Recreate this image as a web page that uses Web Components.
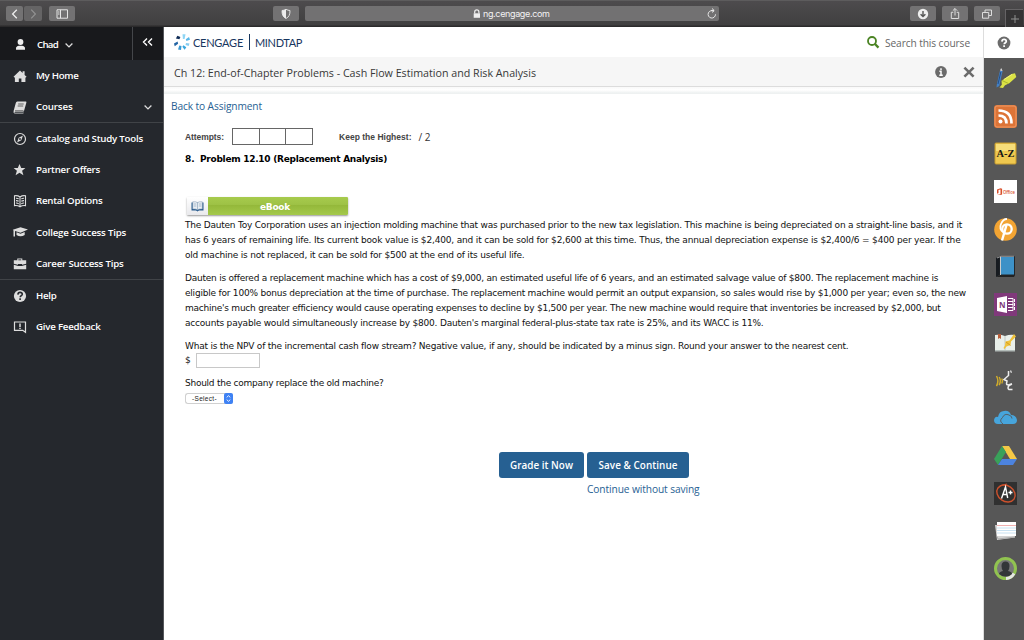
<!DOCTYPE html>
<html lang="en"><head><meta charset="utf-8"><title>MindTap</title>
<style>
html,body{margin:0;height:100%;overflow:hidden;background:#fff}
body{font-family:"Open Sans","Noto Sans",sans-serif}
</style></head><body>
<mind-app></mind-app>
<script>
const make=(name,html,setup)=>customElements.define(name,class extends HTMLElement{
  connectedCallback(){
    if(this.shadowRoot)return;
    const r=this.attachShadow({mode:'open'});
    r.innerHTML=typeof html==='function'?html(this):html;
    if(setup)setup(this,r);
  }
});
const icons={
user:'<circle cx="8.500" cy="5" r="2.900" fill="#eee"/><path d="M4 12.800v-1.600q0-2 3-2.500h3q3 .5 3 2.500v1.600z" fill="#eee"/>',
home:'<path d="M1.500 8.800 8 2.600l2.600 2.500V3.300h2v3.600l2 1.900-1.200 1V14H9.400v-3.600H6.800V14H2.900V9.800z" fill="#ddd"/>',
courses:'<path d="M5.300 2.500h8.500q.8 0 .6 1l-2.400 8.500q-.3.8-1.200.8H3.500q-1.200.2-1 1h8.800l.5-.7-.4 1.400H2.600q-1.500-.4-1-2.500L3.800 4q.3-1.500 1.500-1.500z" fill="#ddd"/><path d="M6.200 5h5.500M5.700 7h5.500M3 11.800h8.500" stroke="#555" stroke-width=".9"/>',
compass:'<circle cx="8" cy="8" r="5.500" fill="none" stroke="#ddd" stroke-width="1.200"/><path d="M11 4.600 9.300 9.200 5 11.400l1.700-4.700z" fill="#ddd"/><circle cx="8" cy="8" r=".9" fill="#25282d"/>',
star:'<path d="m7.500 2 1.700 3.900h4.200l-3.300 2.800 1.300 4.500-3.900-2.500-3.900 2.500 1.300-4.500-3.300-2.800h4.200z" fill="#ddd"/>',
book:'<path d="M8 4Q5.500 2.200 2.500 2.800v9.800q3-.5 5.500 1.200 2.500-1.700 5.500-1.200V2.800Q10.500 2.200 8 4zV13.500M4 5.200q1.500-.1 2.700.7M4 7.600q1.500-.1 2.700.7M4 10q1.500-.1 2.700.7M12 5.200q-1.500-.1-2.700.7M12 7.600q-1.500-.1-2.700.7M12 10q-1.500-.1-2.700.7" fill="none" stroke="#ddd" stroke-width="1.100"/>',
cap:'<path d="M.8 4.800 8.500 2.200 16 4.600 8.500 7.800 3 5.900v5.600H1.500V5.400z" fill="#ddd"/><path d="M4.500 7.300 8.500 8.800l4.200-1.700v2.800q-4.200 2.800-8.200 0z" fill="#ddd"/>',
brief:'<path d="M5.300 4.300V2.500h5v1.800M1.800 4.300h12.400v3.400L10 8.800v-.7H6v.7L1.800 7.700zM1.800 8.800l4.300 1.100h3.800l4.300-1.100v4.400H1.800z" fill="#ddd"/><path d="M6.300 4.300V3.400h3v.9z" fill="#25282d"/>',
help:'<circle cx="8" cy="8" r="6.100" fill="#ddd"/><path d="M5.900 6.600q.1-2.200 2.200-2.200t2.200 1.800c0 1.500-2 1.500-2.100 3.100M8.100 10.300v1.600" fill="none" stroke="#25282d" stroke-width="1.600"/>',
feedback:'<path d="M2.500 3h11v10.300l-2.800-2H2.500z" fill="none" stroke="#ddd" stroke-width="1.200"/><path d="M8 4.400v3.500M8 8.800v1.300" stroke="#ddd" stroke-width="1.500"/>',
qgray:'<circle cx="8" cy="8" r="6.400" fill="#6b6b6b"/><path d="M5.900 6.600q.1-2.200 2.200-2.200t2.200 1.800c0 1.500-2 1.500-2.100 3.100M8.100 10.300v1.600" fill="none" stroke="#fff" stroke-width="1.700"/>',
info:'<circle cx="8" cy="8" r="5.900" fill="#6b6b6b"/><path d="M8 4.300v1.700M6.400 7.300H8v4M6.300 11.200h3.500" fill="none" stroke="#fff" stroke-width="1.500"/>',
close:'<path d="m3.400 3.600 9.200 9M12.600 3.600l-9.200 9" stroke="#6b6b6b" stroke-width="2.600"/>',
search:'<circle cx="7" cy="7" r="4" fill="none" stroke="#4b8424" stroke-width="1.800"/><path d="m10 10 3.500 3.600" stroke="#4b8424" stroke-width="2.300"/>',
down:'<path d="m4.600 6.500 3.400 3.400 3.400-3.400" fill="none" stroke="#ddd" stroke-width="1.300"/>',
dbl:'<path d="M7 4.500 3.500 8 7 11.500M12 4.500 8.500 8l3.500 3.500" fill="none" stroke="#fff" stroke-width="1.400"/>',
back:'<path d="M9.800 3.700 5.600 8l4.200 4.300" fill="none" stroke="#eee" stroke-width="1.300"/>',
fwd:'<path d="M6.200 3.700 10.400 8l-4.200 4.300" fill="none" stroke="#929292" stroke-width="1.200"/>',
panel:'<path d="M3 3.800h10.500v8.400H3zM6.500 3.800v8.400M4 6h1.500M4 8h1.500" fill="none" stroke="#e5e5e5"/>',
shield:'<path d="M8 3.300q2 1.200 4 1.200c.1 4-1 6.500-4 8-3-1.500-4.100-4-4-8q2 0 4-1.200z" fill="none" stroke="#ddd"/><path d="M8 3.300v9.200c-3-1.500-4.100-4-4-8q2 0 4-1.200z" fill="#eee"/>',
lock:'<path d="M5.700 7.500V5.900q0-2 2.100-2t2.100 2v1.600" fill="none" stroke="#eee" stroke-width="1.200"/><path d="M4.700 7.300H11v4.500H4.700z" fill="#eee"/>',
reload:'<path d="M10.900 5.300A3.700 3.700 0 1 0 12.500 8.300M8 4.500h3M9 2.500l2.200 2-2.200 2" fill="none" stroke="#e5e5e5"/>',
dl:'<circle cx="8" cy="8" r="5.200" fill="#eee"/><path d="M8 5v5.500M5.600 8.200 8 10.600l2.400-2.400" fill="none" stroke="#555" stroke-width="1.400"/>',
share:'<path d="M6.300 6.300h-2v6.200h7.400V6.300h-2M8 9.500V2.600M5.800 4.700 8 2.500l2.200 2.200" fill="none" stroke="#ddd"/>',
tabs:'<path d="M3.500 6.500h6.200v5.700H3.500zM6 6.300V4h6.500v5.500h-2.600" fill="none" stroke="#ddd"/>',
plus:'<path d="M8 4v8M4 8h8" stroke="#909090"/>',
logo:'<path d="M8.500.3h3L10.600 5H8.900z" fill="#8fd6f5"/><path d="m11.800 5.300 3.200-2.200 1 2.600-3.600 1.400z" fill="#5bb8e8"/><path d="m12 9 3.500.4-.8 2.600-3.200-1z" fill="#86cdf1"/><path d="m9.400 11.300 2.900 1.900-1.700 2.500-2.200-3z" fill="#36a7df"/><path d="m5.300 11.400 2.200.5-.5 4.100-3-.6z" fill="#3c9ad3"/><path d="m3.600 7.500.5 2.300-3.400 2.400L0 9.500z" fill="#2465a4"/><path d="m3.400 1.800 3 1.200-1 2.300-3.500-.8z" fill="#102d57"/>'
};
make('ui-icon',h=>`<style>:host{display:block;flex:none;width:16px;height:16px}svg{display:block;width:100%;height:100%}</style><svg viewBox="0 0 16 16">${icons[h.getAttribute('name')]}</svg>`);

make('browser-button','<style>:host{display:flex;align-items:center;justify-content:center;box-sizing:border-box;height:15px;width:26px;flex:none;background:#737273;border-radius:2px}</style><slot></slot>');
make('browser-bar',`<style>
:host{display:flex;align-items:center;box-sizing:border-box;height:27px;padding-left:6px;background:linear-gradient(#5d5c5d 0 1px,#4d4b4d 1px,#403f40 25px,#2b2a2b 26px);font-family:Inter,"Liberation Sans",sans-serif}
.b{width:17px;margin-right:1px}.d{width:18px;background:#656465}
.url{display:flex;align-items:center;width:414px;height:15px;background:#727172;border-radius:2px;margin-left:6px;box-sizing:border-box;padding:0 0 0 164px;color:#f2f2f2;font-size:9px}
.url x-fit{margin-left:-2px}
.plus{align-self:flex-end;width:18px;height:18px;border:solid #656365;border-width:1px 0 0 1px;background:#353435;display:flex;justify-content:center;align-items:center;box-sizing:border-box;margin-left:5px}
</style>
<browser-button class="b"><ui-icon name="back"></ui-icon></browser-button><browser-button class="d"><ui-icon name="fwd"></ui-icon></browser-button>
<browser-button style="margin-left:7px"><ui-icon name="panel"></ui-icon></browser-button>
<browser-button style="margin-left:198px"><ui-icon name="shield"></ui-icon></browser-button>
<div class="url"><ui-icon name="lock"></ui-icon><x-fit w="66.500">ng.cengage.com</x-fit><ui-icon name="reload" style="margin-left:153px"></ui-icon></div>
<browser-button style="margin-left:191px"><ui-icon name="dl"></ui-icon></browser-button>
<browser-button style="margin-left:6px"><ui-icon name="share"></ui-icon></browser-button>
<browser-button style="margin-left:6px"><ui-icon name="tabs"></ui-icon></browser-button>
<div class="plus"><ui-icon name="plus"></ui-icon></div>`);

make('nav-item',h=>`<style>:host{display:flex;align-items:center;height:31.200px;box-sizing:border-box;padding-left:12px;color:#fff;font:600 9.700px "Open Sans",sans-serif}
.t{margin-left:8px;padding-bottom:1px}.m{margin-left:auto;margin-right:7px}</style><ui-icon name="${h.getAttribute('icon')}"></ui-icon><x-fit class="t" w="${h.getAttribute('w')}">${h.getAttribute('label')}</x-fit>${h.hasAttribute('more')?'<ui-icon class="m" name="down"></ui-icon>':''}`);
make('side-nav',`<style>:host{display:flex;flex-direction:column;width:164px;box-sizing:border-box;background:#25282d;border-right:1px solid #55575b}
.u{display:flex;height:33px;background:#18191c;align-items:center;font:600 9.700px "Open Sans",sans-serif;color:#fff}
.n{width:133px;height:33px;box-sizing:border-box;border-right:1px solid #44464a;display:flex;align-items:center;padding:2px 0 0 12px}
.n x-fit{margin:0 3px 0 9px}.c{flex:1;display:flex;justify-content:center;padding-bottom:3px}
hr{margin:0;border:0;height:1px;background:#404347;flex:none}</style>
<div class="u"><div class="n"><ui-icon name="user"></ui-icon><x-fit w="21">Chad</x-fit><ui-icon name="down"></ui-icon></div><div class="c"><ui-icon name="dbl"></ui-icon></div></div>
<nav-item icon="home" label="My Home" w="42.500"></nav-item><nav-item icon="courses" label="Courses" w="36.500" more></nav-item><hr>
<nav-item icon="compass" label="Catalog and Study Tools" w="107"></nav-item><nav-item icon="star" label="Partner Offers" w="64"></nav-item><nav-item icon="book" label="Rental Options" w="66.500"></nav-item><nav-item icon="cap" label="College Success Tips" w="90"></nav-item><nav-item icon="brief" label="Career Success Tips" w="87.500"></nav-item><hr>
<nav-item icon="help" label="Help" w="20.500"></nav-item><nav-item icon="feedback" label="Give Feedback" w="64.500"></nav-item>`);

make('course-header',`<style>:host{display:block;font-family:"Open Sans","Noto Sans",sans-serif}
.a{height:30px;display:flex;align-items:center;padding:0 13px 0 10px;background:#fff;color:#17365e;font:11px Lato,sans-serif}
.a .s{width:1px;height:16px;background:#17365e;margin:0 5px 0 6px}.a .f{margin-left:auto;margin-right:4px}.q{font:10.200px "Open Sans",sans-serif;color:#666;padding-top:1px}
.b{display:flex;align-items:center;background:#f6f6f6;padding:2px 6px 0 10px;box-sizing:border-box;color:#383838;font-size:10.700px;border-bottom:1px solid #dcdcdc;height:30px}
.b .i{margin-left:auto;margin-right:12px}.b ui-icon{margin-top:-1px}.g{height:7px;background:linear-gradient(#fafafa 0 1px,#fff 3px,#eef1f1 6px)}
</style><div class="a"><ui-icon name="logo"></ui-icon><x-fit w="50" style="margin-left:3px">CENGAGE</x-fit><i class="s"></i><x-fit w="47">MINDTAP</x-fit><ui-icon class="f" name="search"></ui-icon><x-fit class="q" w="85">Search this course</x-fit></div>
<div class="b"><x-fit w="362">Ch 12: End-of-Chapter Problems - Cash Flow Estimation and Risk Analysis</x-fit><ui-icon class="i" name="info"></ui-icon><ui-icon name="close"></ui-icon></div><div class="g"></div>`);

make('action-button','<style>:host{display:flex;align-items:center;justify-content:center;box-sizing:border-box;height:26px;background:#266092;border-radius:3px;color:#fff;font:600 9.900px "Open Sans",sans-serif}</style><slot></slot>');
make('ebook-button',`<style>:host{display:flex;box-sizing:border-box;width:161px;height:18px;border-radius:1px;box-shadow:0 1px 2px #999;overflow:hidden}
.i{width:21px;background:linear-gradient(#fff,#e9e9ec);display:flex;align-items:center;justify-content:center}.t{flex:1;display:flex;align-items:center;justify-content:center;padding-right:6px;padding-top:2px;background:linear-gradient(#a7cb4d 0%,#9dc145 45%,#94b83a 46%,#a4c94b);color:#fff;font:bold 9px "DejaVu Sans",sans-serif}</style>
<div class="i"><svg width="13" height="11" viewBox="0 0 13 11"><path d="M.5 1.500h12v8H8L6.500 10.500 5 9.500H.5z" fill="#275a8c"/><path d="M1.700.8Q5 .3 6.500 1.600 8 .3 11.300.8v7.200Q8 7.600 6.500 8.800 5 7.600 1.700 8z" fill="#e9eef3" stroke="#7893ae" stroke-width=".5"/><path d="M6.500 1.600v7M2.800 3h2.500M2.800 5h2.500M7.800 3h2.500M7.800 5h2.500" stroke="#91a8bd" stroke-width=".7"/></svg></div><div class="t"><x-fit w="30">eBook</x-fit></div>`);

make('problem-page',`<style>:host{display:flex;flex-direction:column;padding:0 0 0 21px;font:9px/15px "DejaVu Sans",sans-serif;color:#111}
.back{margin:5px 0 0 -14px;font:10.200px/14px "Open Sans",sans-serif;color:#286193}
.att{display:flex;align-items:center;margin-top:15px;height:17px;font:bold 8.500px "Liberation Sans",sans-serif;color:#444}
.boxes{display:flex;margin:0 26px 0 8px;border:1px solid #666;box-sizing:border-box;width:81px;height:17px}.boxes i{flex:1;border-right:1px solid #666}.boxes i:last-child{border:0}
h2{font:bold 9px/15px "DejaVu Sans",sans-serif;margin:7px 0 0;color:#000}
ebook-button{margin:30px 0 0 2px}p{margin:0 0 8px;display:flex;flex-direction:column;align-items:flex-start}
.n{display:flex;align-items:center;height:15px;margin-top:-1px}.n input{width:64px;height:15px;box-sizing:border-box;border:1px solid #c8c8c8;padding:0;margin:0 0 0 5px}
.sel{display:flex;width:48px;height:11px;border:1px solid #d0d0d0;border-right:0;border-radius:3px;box-sizing:border-box;font:6.500px/9px "Liberation Sans",sans-serif;margin-top:2px;color:#222}
.sel x-fit{margin-left:6px;flex:none}.sel svg{margin:-1px 0 0 auto;flex:none}
.act{display:flex;gap:3px;margin:48px 0 0 314px}.skip{margin:4px 0 0 402px;font:10.200px/14px "Open Sans",sans-serif;color:#286193}
</style>
<x-fit class="back" w="91">Back to Assignment</x-fit>
<div class="att"><x-fit w="39">Attempts:</x-fit><div class="boxes"><i></i><i></i><i></i></div><x-fit w="72.500">Keep the Highest:</x-fit><x-fit w="12" style="margin-left:7px;font:10px 'Open Sans',sans-serif;color:#333">/ 2</x-fit></div>
<h2><x-fit style="width:15px" nofit>8.</x-fit><x-fit w="187">Problem 12.10 (Replacement Analysis)</x-fit></h2>
<ebook-button></ebook-button>
<p style="margin-top:3px"><x-fit w="777">The Dauten Toy Corporation uses an injection molding machine that was purchased prior to the new tax legislation. This machine is being depreciated on a straight-line basis, and it</x-fit><x-fit w="775.500">has 6 years of remaining life. Its current book value is $2,400, and it can be sold for $2,600 at this time. Thus, the annual depreciation expense is $2,400/6 = $400 per year. If the</x-fit><x-fit w="339.500">old machine is not replaced, it can be sold for $500 at the end of its useful life.</x-fit></p>
<p><x-fit w="753">Dauten is offered a replacement machine which has a cost of $9,000, an estimated useful life of 6 years, and an estimated salvage value of $800. The replacement machine is</x-fit><x-fit w="781">eligible for 100% bonus depreciation at the time of purchase. The replacement machine would permit an output expansion, so sales would rise by $1,000 per year; even so, the new</x-fit><x-fit w="755.500">machine's much greater efficiency would cause operating expenses to decline by $1,500 per year. The new machine would require that inventories be increased by $2,000, but</x-fit><x-fit w="578.500">accounts payable would simultaneously increase by $800. Dauten's marginal federal-plus-state tax rate is 25%, and its WACC is 11%.</x-fit></p>
<p><x-fit w="663.500">What is the NPV of the incremental cash flow stream? Negative value, if any, should be indicated by a minus sign. Round your answer to the nearest cent.</x-fit><span class="n"><x-fit w="5.500">$</x-fit><input></span></p>
<x-fit w="198.500">Should the company replace the old machine?</x-fit>
<div class="sel"><x-fit w="25">-Select-</x-fit><svg width="9" height="11" viewBox="0 0 9 11"><rect width="9" height="11" rx="2" fill="#3f82f4"/><path d="M2.700 4.400 4.500 2.700l1.800 1.700M2.700 6.600l1.800 1.700 1.800-1.700" fill="none" stroke="#fff" stroke-width=".9"/></svg></div>
<div class="act"><action-button style="width:85px"><x-fit w="63">Grade it Now</x-fit></action-button><action-button style="width:102px"><x-fit w="79">Save &amp; Continue</x-fit></action-button></div>
<x-fit class="skip" w="112.500">Continue without saving</x-fit>`);

const apps=[
'<path d="m6 3.500 2.600.6L5.300 19l-2.800 1.500.3-3z" fill="#4380c4"/><path d="m6 3.500 1.200-2.500 1.400 3.100z" fill="#ddd"/><path d="m4 17 2.800-12" stroke="#244f88"/><path d="m17.500 7 3.500-.8L22.300 10l-7 6.200-4.300 2-2 2.800-3.500-.5 2.300-2.700-.3-4z" fill="#dbe246"/><path d="m8 13.500 6.500 3" stroke="#a9b52c"/><path d="m10 12.500 8-5" stroke="#f1f47c"/>',
'<rect width="23" height="23" rx="3" fill="#dd7437"/><rect x="1" y="1" width="21" height="21" rx="2" fill="none" stroke="#ef9965"/><circle cx="6.500" cy="16.500" r="2" fill="#fff"/><path d="M4.500 10.500q8 0 8 8M4.500 5.500q13 0 13 13" fill="none" stroke="#fff" stroke-width="2.700"/>',
'<rect x="1" y="1" width="21" height="21" rx="1" fill="#efc84f" stroke="#c79d31"/><path d="M2 2h19v7H2z" fill="#f7de7a"/><text x="2.500" y="15" textLength="18" lengthAdjust="spacingAndGlyphs" font-family="Liberation Serif" font-weight="bold" font-size="10.500" fill="#151515">A-Z</text>',
'<path fill="#fff" d="M0 0h23v23H0z"/><path d="m3 9.500 3.500-1.200 1.600.5v5.700l-1.600.5L3 14l3.500.2v-4.700l-2 .6v3L3 13.700z" fill="#d94f2b"/><text x="9" y="13.700" textLength="12" lengthAdjust="spacingAndGlyphs" font-family="Open Sans" font-size="5" font-weight="600" fill="#d94f2b">Office</text>',
'<circle cx="11.500" cy="11.500" r="11.300" fill="#f2a433"/><path d="M8 22.500 12.500 7" fill="none" stroke="#fff" stroke-width="2.400"/><circle cx="13" cy="11" r="4.700" fill="none" stroke="#fff" stroke-width="2.300"/><path d="M9 14Q5 11 7 6t6-5" fill="none" stroke="#fff" stroke-width="1.800"/>',
'<path d="m2 3 4-2v19l-4 2z" fill="#171b20"/><path d="M6 1.500h14.500V20H6z" fill="#3d91c7" stroke="#23272b"/><path d="m2 22 4-2h15l-1 2z" fill="#222"/><path d="M6.500 2v18" stroke="#ccc"/><path d="m3 3 4-1.700h13" stroke="#999" fill="none"/>',
'<path fill="#80397b" d="M0 0h23v23H0z"/><path fill="#fff" d="m3 5 10-2v17L3 18z"/><text x="5" y="14.500" font-family="Open Sans" font-weight="bold" font-size="8" fill="#80397b">N</text><path d="M14 5.500h5v12h-5M14 8.500h5M14 11.500h5M14 14.500h5M20.500 6v3M20.500 10v3M20.500 14v3" fill="none" stroke="#fff"/>',
'<path d="M1 4q5-1 10 1 5-2 10-1v15H1z" fill="#e9efea"/><path d="M1 19h20v1.500H1z" fill="#b4bdba"/><path d="M11 5v14" stroke="#bec7c4"/><path d="M4 3h3v5L5.500 7 4 8z" fill="#b95e3a"/><path d="m20 3 2 2.500-5 5-.5 3.500-4 1.500-2 2.500-1-1 1.500-2.500.5-4 4-1z" fill="#efc23c"/><path d="m12 11 4.500 3.500" stroke="#d59b20"/>',
'<path d="M7.800 9.500q1.400 2.500 0 5M5.200 8q2.300 4 0 8.200M2.500 7q2.800 5 0 10.200" fill="none" stroke="#d0ac2b" stroke-width="1.500"/><path d="M14.500 2v4.500L10 10.500l3 1.500-.5 2.500q0 1.500 2 1.500l3.500-1.300M18 15l-3 1.500q-2 3 0 4h3.500" fill="none" stroke="#eee" stroke-width="1.500"/><path d="m16.500 1.500 1 2.200" stroke="#ddd" stroke-width="1.300"/>',
'<path d="M4 18q-4 0-4-4 1-4 4-3 1-6 6-6 5-1 7 4 5 0 6 5 0 4-4 4z" fill="#47a5dc"/><path d="M9 18q-4.500-3-.5-6.500 2-4.500 6.500-2.500 3 1 3 3.500" fill="none" stroke="#575757" stroke-width=".9"/>',
'<path d="M8 2h7l8 13h-7z" fill="#f4c846"/><path d="m8 2 4 6-8 13-4-6z" fill="#39a15a"/><path d="M8 15h15l-4 6H4z" fill="#4c83df"/>',
'<path fill="#303030" d="M0 0h23v23H0z"/><ellipse cx="12" cy="11.500" rx="9.800" ry="7.800" transform="rotate(35 12 11.500)" fill="none" stroke="#cc512d" stroke-width="1.400"/><path d="M3 7Q7 2 13 2" fill="none" stroke="#cc512d"/><path d="M7.500 16.500 11.500 5l2.200 11M8.500 12.500h5M14.500 10.500h4M16.500 8.500v4" fill="none" stroke="#fff" stroke-width="1.400"/>',
'<path d="m1 6 19 1 1 11.500L3 21z" fill="#d3d3d3"/><path d="M3 3h19v14H3z" fill="#fff"/><path d="M3 6.500h19" stroke="#efb0b0"/><path d="M3 9h19M3 11.500h19M3 14h19" stroke="#c3dff0" stroke-width=".9"/><path d="m3 17.500 1 2.500 17-2" fill="none" stroke="#aaa"/>',
'<circle cx="11.500" cy="11.500" r="10" fill="#777" stroke="#91c350" stroke-width="3"/><path d="M12 21.500q5 0 8-5" fill="none" stroke="#e5e5e5" stroke-width="3"/><path d="M7.500 9q0-4.500 4-4.500t4 4.500q0 3-1.500 5 4 1 4 3-3 2.500-6.500 2.500T5 17q0-2 4-3-1.500-2-1.500-5z" fill="#333638"/>'
];
make('app-tile',h=>`<style>:host{display:block;width:23px;height:23px}svg{display:block}</style><svg width="23" height="23" viewBox="0 0 23 23">${apps[+h.getAttribute('app')]}</svg>`);
make('app-rail',`<style>:host{display:flex;flex-direction:column;width:41px;box-sizing:border-box;border-left:1px solid #ddd;background:#575757}
.q{height:31px;background:#fff;display:flex;align-items:center;justify-content:center}.l{display:flex;flex-direction:column;align-items:center;gap:14.700px;padding:9px 0 0 2px}</style><div class="q"><ui-icon name="qgray"></ui-icon></div><div class="l">${apps.map((_,i)=>`<app-tile app="${i}"></app-tile>`).join('')}</div>`);

make('mind-app',`<style>:host{display:grid;grid-template:27px 613px/164px 819px 41px;width:1024px;height:640px;background:#fff}browser-bar{grid-column:1/4}main{min-width:0}</style>
<browser-bar></browser-bar><side-nav></side-nav><main><course-header></course-header><problem-page></problem-page></main><app-rail></app-rail>`);

/* Single-line label whose tracking adapts so that it spans the width given in "w". */
customElements.define('x-fit',class extends HTMLElement{
  connectedCallback(){
    if(this.shadowRoot)return;
    this.attachShadow({mode:'open'}).innerHTML='<style>:host{display:inline-block;white-space:nowrap;flex:none}</style><slot></slot>';
    if(this.hasAttribute('nofit'))return;
    const g=document.createRange();g.selectNodeContents(this);
    const w=+this.getAttribute('w'),n=this.textContent.length;
    this.style.letterSpacing=((w-g.getBoundingClientRect().width)/n)+'px';
    this.style.width=w+'px';
  }
});
</script></body></html>
